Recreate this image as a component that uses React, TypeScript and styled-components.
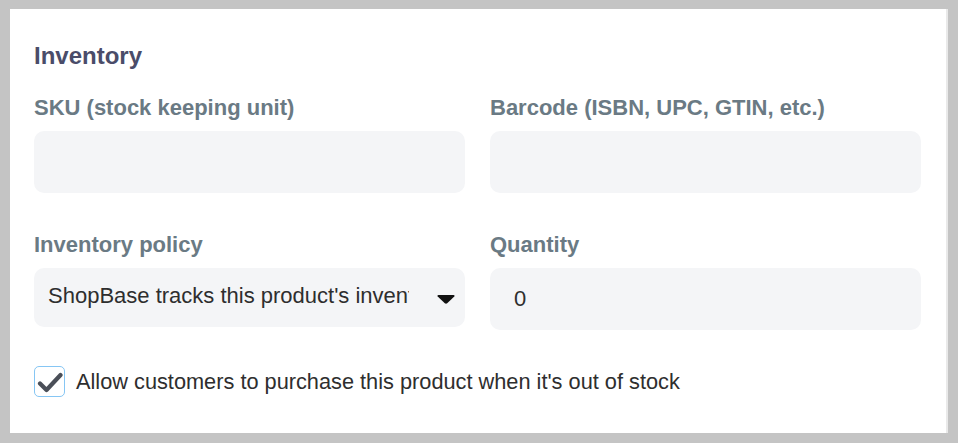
import styled, { createGlobalStyle } from "styled-components";

const GlobalStyle = createGlobalStyle`
  html, body {
    margin: 0;
    padding: 0;
  }
  body {
    background: #c4c4c4;
    font-family: "Liberation Sans", Arial, sans-serif;
  }
  #root {
    padding: 9px 10px 10px;
  }
`;

const Card = styled.section`
  background: #ffffff;
  border-right: 2px solid #e9e9e9;
  padding: 33px 25px 36px 24px;
  box-sizing: content-box;
  width: 887px;
`;

const Title = styled.h2`
  margin: 0 0 25px;
  font-size: 24px;
  line-height: 28px;
  font-weight: 700;
  color: #4a4c69;
`;

const Grid = styled.div`
  display: grid;
  grid-template-columns: 431px 431px;
  column-gap: 25px;
  row-gap: 39px;
  align-items: start;
`;

const Field = styled.div`
  display: flex;
  flex-direction: column;
  gap: 10px;
`;

const Label = styled.label`
  font-size: 22px;
  line-height: 26px;
  font-weight: 700;
  color: #6a7a84;
`;

const Input = styled.input<{ $padLeft?: number }>`
  box-sizing: border-box;
  height: 62px;
  width: 100%;
  border: none;
  outline: none;
  border-radius: 10px;
  background: #f4f5f7;
  padding: 0 14px 0 ${({ $padLeft }) => $padLeft ?? 14}px;
  font-family: "Liberation Sans", Arial, sans-serif;
  font-size: 22px;
  color: #2e2e2e;
`;

const Select = styled.div`
  box-sizing: border-box;
  height: 59px;
  display: flex;
  align-items: center;
  gap: 28px;
  padding: 0 10px 0 14px;
  border-radius: 10px;
  background: #f4f5f7;
  cursor: pointer;
`;

const SelectText = styled.span`
  flex: 1;
  overflow: hidden;
  white-space: nowrap;
  font-size: 22px;
  line-height: 26px;
  margin-top: -4px;
  color: #2e2e2e;
`;

const Caret = styled.svg`
  flex: none;
  width: 18px;
  height: 10px;
  margin-top: 2px;
`;

const CheckRow = styled.label`
  display: flex;
  align-items: center;
  gap: 11px;
  margin-top: 36px;
  cursor: pointer;
`;

const CheckBox = styled.span`
  box-sizing: border-box;
  width: 31px;
  height: 31px;
  border: 1px solid #86c6f4;
  border-radius: 5px;
  display: flex;
  align-items: center;
  justify-content: center;
  background: #ffffff;
`;

const CheckText = styled.span`
  font-size: 21.75px;
  line-height: 26px;
  color: #2e2e2e;
`;

export default function App() {
  return (
    <>
      <GlobalStyle />
      <Card>
        <Title>Inventory</Title>
        <Grid>
          <Field>
            <Label>SKU (stock keeping unit)</Label>
            <Input type="text" />
          </Field>
          <Field>
            <Label>Barcode (ISBN, UPC, GTIN, etc.)</Label>
            <Input type="text" />
          </Field>
          <Field>
            <Label>Inventory policy</Label>
            <Select>
              <SelectText>ShopBase tracks this product's inventory</SelectText>
              <Caret viewBox="0 0 18 10">
                <path d="M1.5 1h15c1 0 1.4 1 .8 1.6l-7.1 6.6c-.7.6-1.7.6-2.4 0L.7 2.6C.1 2 .5 1 1.5 1z" fill="#111" />
              </Caret>
            </Select>
          </Field>
          <Field>
            <Label>Quantity</Label>
            <Input type="text" defaultValue="0" $padLeft={24} />
          </Field>
        </Grid>
        <CheckRow>
          <CheckBox>
            <svg width="26" height="22" viewBox="0 0 26 22">
              <path d="M3 12.5l6.5 6.5L23.5 4" fill="none" stroke="#4a4f58" strokeWidth="4.2" strokeLinecap="round" strokeLinejoin="round" />
            </svg>
          </CheckBox>
          <CheckText>Allow customers to purchase this product when it's out of stock</CheckText>
        </CheckRow>
      </Card>
    </>
  );
}
